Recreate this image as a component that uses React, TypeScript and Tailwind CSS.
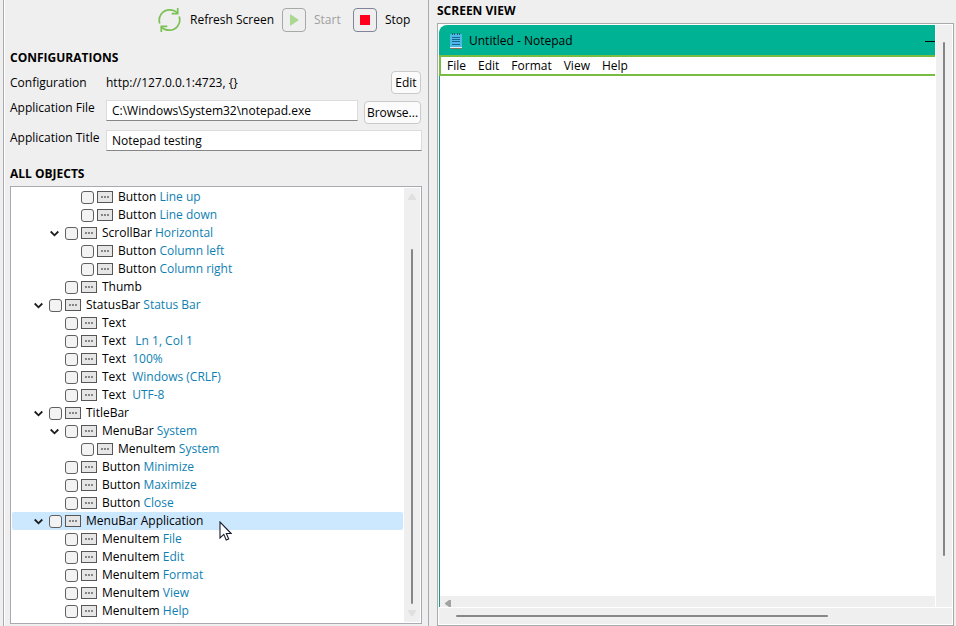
import React from "react";

type TreeNode = {
  level: 1 | 2 | 3;
  type: string;
  name?: string;
  open?: boolean;
  selected?: boolean;
};

const nodes: TreeNode[] = [
  { level: 3, type: "Button", name: "Line up" },
  { level: 3, type: "Button", name: "Line down" },
  { level: 2, type: "ScrollBar", name: "Horizontal", open: true },
  { level: 3, type: "Button", name: "Column left" },
  { level: 3, type: "Button", name: "Column right" },
  { level: 2, type: "Thumb" },
  { level: 1, type: "StatusBar", name: "Status Bar", open: true },
  { level: 2, type: "Text" },
  { level: 2, type: "Text ", name: " Ln 1, Col 1" },
  { level: 2, type: "Text ", name: "100%" },
  { level: 2, type: "Text ", name: "Windows (CRLF)" },
  { level: 2, type: "Text ", name: "UTF-8" },
  { level: 1, type: "TitleBar", open: true },
  { level: 2, type: "MenuBar", name: "System", open: true },
  { level: 3, type: "MenuItem", name: "System" },
  { level: 2, type: "Button", name: "Minimize" },
  { level: 2, type: "Button", name: "Maximize" },
  { level: 2, type: "Button", name: "Close" },
  { level: 1, type: "MenuBar", name: "Application", open: true, selected: true },
  { level: 2, type: "MenuItem", name: "File" },
  { level: 2, type: "MenuItem", name: "Edit" },
  { level: 2, type: "MenuItem", name: "Format" },
  { level: 2, type: "MenuItem", name: "View" },
  { level: 2, type: "MenuItem", name: "Help" },
];

const indents = { 1: "pl-[22px]", 2: "pl-[38px]", 3: "pl-[54px]" };

function RefreshIcon() {
  return (
    <svg width="24" height="24" viewBox="0 0 24 24" fill="none" stroke="#7cc154" strokeWidth="1.7" aria-hidden="true">
      <path d="M1.700 15.500C-.3 8 5 1.800 11.500 1.800c3.500 0 6.300 1.200 8.400 3.600" />
      <path d="M19.700 0v5.600h-6" />
      <path d="M21.300 8.500c2 7.500-3.300 13.700-9.800 13.700-3.500 0-6.300-1.200-8.400-3.600" />
      <path d="M3.300 24v-5.600h6" />
    </svg>
  );
}

function Chevron() {
  return (
    <svg width="10" height="10" viewBox="0 0 10 10" fill="none" stroke="#1c1c1c" strokeWidth="1.8" aria-hidden="true">
      <path d="M.7 3.500 4.500 7.300 8.300 3.500" />
    </svg>
  );
}

function ObjectIcon() {
  return (
    <svg width="16" height="12" viewBox="0 0 16 12" shapeRendering="crispEdges" aria-hidden="true">
      <rect x="0.500" y="0.500" width="15" height="11" fill="#e6e6e6" stroke="#565656" />
      <path d="M4 5h2v2H4zM7 5h2v2H7zM10 5h2v2h-2z" fill="#858585" />
    </svg>
  );
}

function NotepadIcon() {
  return (
    <svg width="14" height="16" viewBox="0 0 14 16" aria-hidden="true">
      <path d="M1 1h12v13H1z" fill="#4fb8e6" />
      <path d="M1 14h12v1H1z" fill="#e4f1f3" />
      <path d="M2 15h11v1H2z" fill="#8a6f58" />
      <path d="M3 4.500h8M3 6.500h8M3 8.500h8M3 11.500h8" stroke="#14688f" />
      <path d="M3.500 0v2M5.500 0v2M8.500 0v2M10.500 0v2" stroke="#17606f" />
    </svg>
  );
}

function TreeRow({ node }: { node: TreeNode }) {
  const label = node.name ? `${node.type} ${node.name}` : node.type;
  return (
    <li className={`flex h-[18px] shrink-0 items-center rounded-xs ${indents[node.level]} ${node.selected ? "bg-[#cce8ff]" : ""}`}>
      <span className="mr-[5px] w-2.5">{node.open && <Chevron />}</span>
      <label className="flex items-center whitespace-pre">
        <input
          type="checkbox"
          aria-label={label}
          className="mr-[3px] size-[13px] appearance-none rounded-[3px] border border-[#606060] bg-[#f3f3f3]"
        />
        <ObjectIcon />
        <span className="ml-[5px]">
          {node.type}
          {node.name && <span className={node.selected ? "" : "text-[#0f7fb2]"}> {node.name}</span>}
        </span>
      </label>
    </li>
  );
}

const inputStyle =
  "h-[21px] min-w-0 flex-1 border border-[#dcdcdc] border-b-[#868686] bg-white px-[5px] outline-none";
const buttonStyle = "mr-px rounded-sm border border-[#cacaca] bg-[#fbfbfb]";
const headingStyle = "h-4 shrink-0 font-bold";

export default function App() {
  return (
    <div className="flex h-screen overflow-hidden bg-[#efefef] font-['Open_Sans','Noto_Sans',sans-serif] text-[12px] leading-4 text-black">
      <aside className="flex w-[429px] shrink-0 pl-[3px]">
        <div className="flex min-w-0 flex-1 flex-col border-x border-[#a9aab0] pr-1.5 pl-1.5 pt-2 pb-0.5 shadow-[inset_1px_0_0_#ffffff]">
          <div className="flex h-6 shrink-0 items-center pl-[148px]">
            <button className="flex items-center gap-2">
              <RefreshIcon />
              <span className="w-[84px] text-left whitespace-nowrap">Refresh Screen</span>
            </button>
            <button disabled className="ml-2 flex items-center gap-2 text-[#a0a0a0]">
              <span className="grid size-6 place-items-center rounded-[4px] border border-[#a8a8a8]">
                <svg width="10" height="12" viewBox="0 0 10 12" aria-hidden="true">
                  <path d="M1 0l9 6-9 6z" fill="#aad890" />
                </svg>
              </span>
              <span className="w-[31px] text-left">Start</span>
            </button>
            <button className="ml-2 flex items-center gap-2">
              <span className="grid size-6 place-items-center rounded-[4px] border border-[#80859a]">
                <span className="size-2.5 bg-[#ff001d]" />
              </span>
              <span>Stop</span>
            </button>
          </div>

          <h2 className={`${headingStyle} mt-[18px]`}>CONFIGURATIONS</h2>
          <div className="mt-[5px] flex flex-col gap-1.5">
            <div className="flex h-[23px] items-center">
              <span className="w-24 shrink-0">Configuration</span>
              <span className="flex-1">http://127.0.0.1:4723, {"{}"}</span>
              <button className={`${buttonStyle} h-[23px] w-[30px]`}>Edit</button>
            </div>
            <div className="flex h-6 items-start">
              <label htmlFor="app-file" className="w-24 shrink-0">Application File</label>
              <input id="app-file" className={inputStyle} defaultValue="C:\Windows\System32\notepad.exe" />
              <button className={`${buttonStyle} ml-1.5 h-[23px] w-[57px] self-end`}>Browse...</button>
            </div>
            <div className="flex h-[21px] items-start">
              <label htmlFor="app-title" className="w-24 shrink-0">Application Title</label>
              <input id="app-title" className={inputStyle} defaultValue="Notepad testing" />
            </div>
          </div>

          <h2 className={`${headingStyle} mt-[15px]`}>ALL OBJECTS</h2>
          <div className="relative mt-1 flex min-h-0 flex-1 border border-[#a9aab0] bg-white p-px">
            <ul className="flex min-w-0 flex-1 flex-col overflow-hidden pr-px">
              {nodes.map((node, i) => (
                <TreeRow key={i} node={node} />
              ))}
            </ul>
            <div className="flex w-4 flex-col items-center bg-[#efefef] py-1.5">
              <svg width="8" height="6" viewBox="0 0 8 6" aria-hidden="true">
                <path d="M3 0h2l3 5v1H0V5z" fill="#e0e0e0" />
              </svg>
              <div className="mt-[49px] mb-1.5 w-0.5 flex-1 rounded-full bg-[#868686]" />
              <svg width="8" height="6" viewBox="0 0 8 6" aria-hidden="true">
                <path d="M3 6h2l3-5V0H0v1z" fill="#e0e0e0" />
              </svg>
            </div>
            <svg className="absolute top-[334px] left-[208px]" width="13" height="20" viewBox="0 0 13 20" aria-hidden="true">
              <path d="M1 1v16l3.800-3.600L7.200 19l2.500-1-2.400-5.500h4.900z" fill="#ffffff" stroke="#1b1b2b" strokeWidth="1.100" />
            </svg>
          </div>
        </div>
      </aside>

      <main className="flex min-w-0 flex-1 flex-col pt-[3px] pr-0.5 pl-2">
        <h2 className={headingStyle}>SCREEN VIEW</h2>
        <div className="mt-1 flex min-h-0 flex-1 flex-col border border-[#a9aaab] bg-white p-px">
          <div className="flex min-h-0 flex-1">
            <section className="flex min-w-0 flex-1 flex-col">
              <header className="flex h-[30px] items-center rounded-tl-lg bg-[#00b294] pt-0.5 pl-2.5">
                <NotepadIcon />
                <span className="ml-1.5 flex-1">Untitled - Notepad</span>
                <span className="h-px w-2.5 bg-black" />
              </header>
              <nav className="flex h-[21px] shrink-0 items-center gap-3 border-2 border-r-0 border-[#78bd42] pl-1.5">
                <button>File</button>
                <button>Edit</button>
                <button>Format</button>
                <button>View</button>
                <button>Help</button>
              </nav>
              <textarea
                aria-label="Notepad text"
                className="min-h-0 w-full flex-1 resize-none border-l border-[#1b9c83] bg-white outline-none"
              />
              <div className="flex h-[11px] shrink-0 items-end border-l border-[#1b9c83] bg-[#efefef] pl-[5px]">
                <svg width="6" height="7" viewBox="0 0 6 7" aria-hidden="true">
                  <path d="M6 0v7H4L0 4V3l4-3z" fill="#a3a3a3" />
                </svg>
              </div>
            </section>
            <div className="ml-px flex w-4 justify-center bg-[#efefef] pt-[17px] pb-[51px]">
              <div className="w-0.5 rounded-full bg-[#868686]" />
            </div>
          </div>
          <div className="mt-px flex h-4 shrink-0 items-center bg-[#efefef] pr-[124px] pl-[17px]">
            <div className="h-0.5 flex-1 rounded-full bg-[#868686]" />
          </div>
        </div>
      </main>
    </div>
  );
}
